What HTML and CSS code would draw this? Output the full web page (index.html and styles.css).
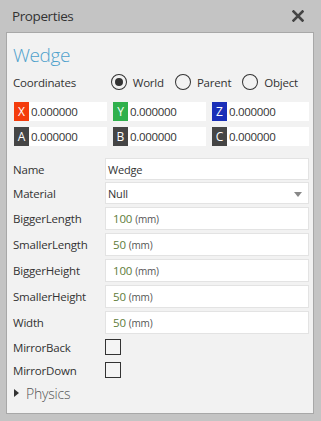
FILE: index.html
```html
<!DOCTYPE html>
<html>
<head>
<meta charset="utf-8">
<link rel="stylesheet" href="styles.css">
</head>
<body>
<div class="window">
  <div class="titlebar">
    <span class="title">Properties</span>
    <svg class="close" width="12" height="12" viewBox="0 0 12 12"><path d="M1.5 1.5 L10.5 10.5 M10.5 1.5 L1.5 10.5" stroke="#444" stroke-width="2.6" stroke-linecap="square"/></svg>
  </div>
  <div class="panel">
    <div class="heading">Wedge</div>
    <div class="coords">
      <span class="coords-label">Coordinates</span>
      <span class="radio checked"></span><span class="radio-text">World</span>
      <span class="radio"></span><span class="radio-text">Parent</span>
      <span class="radio"></span><span class="radio-text">Object</span>
    </div>
    <div class="vec-grid">
      <div class="vec"><span class="tag tag-x">X</span><span class="vec-val">0.000000</span></div>
      <div class="vec"><span class="tag tag-y">Y</span><span class="vec-val">0.000000</span></div>
      <div class="vec"><span class="tag tag-z">Z</span><span class="vec-val">0.000000</span></div>
      <div class="vec"><span class="tag tag-d">A</span><span class="vec-val">0.000000</span></div>
      <div class="vec"><span class="tag tag-d">B</span><span class="vec-val">0.000000</span></div>
      <div class="vec"><span class="tag tag-d">C</span><span class="vec-val">0.000000</span></div>
    </div>
    <div class="props">
      <div class="row row-text"><span class="label">Name</span><div class="field">Wedge</div></div>
      <div class="row row-text"><span class="label">Material</span><div class="field select">Null<span class="arrow"></span></div></div>
      <div class="row row-num"><span class="label">BiggerLength</span><div class="field num"><span class="n">100</span><span class="unit">(mm)</span></div></div>
      <div class="row row-num"><span class="label">SmallerLength</span><div class="field num"><span class="n">50</span><span class="unit">(mm)</span></div></div>
      <div class="row row-num"><span class="label">BiggerHeight</span><div class="field num"><span class="n">100</span><span class="unit">(mm)</span></div></div>
      <div class="row row-num"><span class="label">SmallerHeight</span><div class="field num"><span class="n">50</span><span class="unit">(mm)</span></div></div>
      <div class="row row-num"><span class="label">Width</span><div class="field num"><span class="n">50</span><span class="unit">(mm)</span></div></div>
      <div class="row row-check"><span class="label">MirrorBack</span><span class="checkbox"></span></div>
      <div class="row row-check"><span class="label">MirrorDown</span><span class="checkbox"></span></div>
    </div>
    <div class="group"><span class="tri"></span><span class="group-text">Physics</span></div>
  </div>
</div>
</body>
</html>
```

FILE: styles.css
```css
* { box-sizing: border-box; }
html, body { margin: 0; padding: 0; }
body {
  background: #c4c4c4;
  font-family: "Open Sans", "Noto Sans", sans-serif;
  color: #333;
  width: 321px;
  height: 421px;
  overflow: hidden;
}
.window {
  display: flex;
  flex-direction: column;
  height: 421px;
}
.titlebar {
  height: 32px;
  display: flex;
  align-items: center;
  justify-content: space-between;
  padding: 0 17px 0 12px;
}
.title {
  font-size: 13.5px;
  color: #333;
  letter-spacing: -0.4px;
}
.close { display: block; }
.panel {
  margin: 0 7px 7px 6px;
  flex: 1;
  background: #f2f2f2;
  border: 1px solid #a8a8a8;
  padding: 10px 4px 0 6px;
  display: flex;
  flex-direction: column;
}
.heading {
  font-size: 19px;
  font-weight: 300;
  line-height: 24px;
  color: #4fa1cc;
  letter-spacing: -0.4px;
}
.coords {
  display: flex;
  align-items: center;
  height: 20px;
  margin-top: 5px;
  font-size: 11.5px;
  letter-spacing: -0.2px;
}
.coords-label { width: 98px; }
.radio {
  width: 16px;
  height: 16px;
  border: 1px solid #333;
  border-radius: 50%;
  display: flex;
  align-items: center;
  justify-content: center;
  margin-right: 6px;
}
.radio.checked::after {
  content: "";
  width: 8px;
  height: 8px;
  border-radius: 50%;
  background: #333;
}
.radio-text { margin-right: 11px; }
.vec-grid {
  display: grid;
  grid-template-columns: 93px 93px 1fr;
  column-gap: 6px;
  row-gap: 6px;
  margin-top: 10px;
  margin-left: 1px;
}
.vec {
  display: flex;
  height: 19px;
  background: #fff;
}
.tag {
  width: 15px;
  color: #fff;
  font-size: 12px;
  display: flex;
  align-items: center;
  justify-content: center;
}
.tag-x { background: #f43c0c; }
.tag-y { background: #2fb04c; }
.tag-z { background: #1a2fb8; }
.tag-d { background: #454545; }
.vec-val {
  font-size: 11.5px;
  line-height: 19px;
  padding-left: 2px;
  color: #333;
  letter-spacing: -0.3px;
}
.props {
  display: flex;
  flex-direction: column;
  margin-top: 12px;
}
.row {
  display: flex;
  align-items: center;
}
.label {
  width: 92px;
  font-size: 11.5px;
  letter-spacing: -0.2px;
  color: #333;
}
.field {
  flex: 1;
  background: #fff;
  border: 1px solid #e3e3e3;
  display: flex;
  align-items: center;
  padding-left: 2px;
  font-size: 11px;
  color: #333;
  letter-spacing: -0.2px;
}
.row-text { height: 22px; margin-bottom: 2px; }
.row-text .field { height: 22px; }
.row-text:nth-child(2) { margin-bottom: 3px; }
.select { position: relative; }
.arrow {
  position: absolute;
  right: 6px;
  top: 9px;
  width: 0;
  height: 0;
  border-left: 4px solid transparent;
  border-right: 4px solid transparent;
  border-top: 5px solid #888;
}
.row-num { height: 23px; margin-bottom: 3px; }
.row-num .field { height: 23px; padding-left: 7px; }
.n { color: #5e7c3a; font-size: 11.5px; margin-right: 3px; }
.unit { color: #555; font-size: 10px; }
.row-check { height: 16px; margin-bottom: 7px; }
.row-check:nth-last-child(2) { margin-top: 2px; }
.checkbox {
  width: 16px;
  height: 16px;
  border: 1px solid #333;
  background: #f4f4f4;
}
.group {
  display: flex;
  align-items: center;
  height: 18px;
  margin-top: -1px;
}
.tri {
  width: 0;
  height: 0;
  border-top: 4px solid transparent;
  border-bottom: 4px solid transparent;
  border-left: 5px solid #333;
  margin: 0 7px 0 1px;
}
.group-text {
  font-size: 14px;
  font-weight: 300;
  color: #555;
  letter-spacing: -0.2px;
}
```
